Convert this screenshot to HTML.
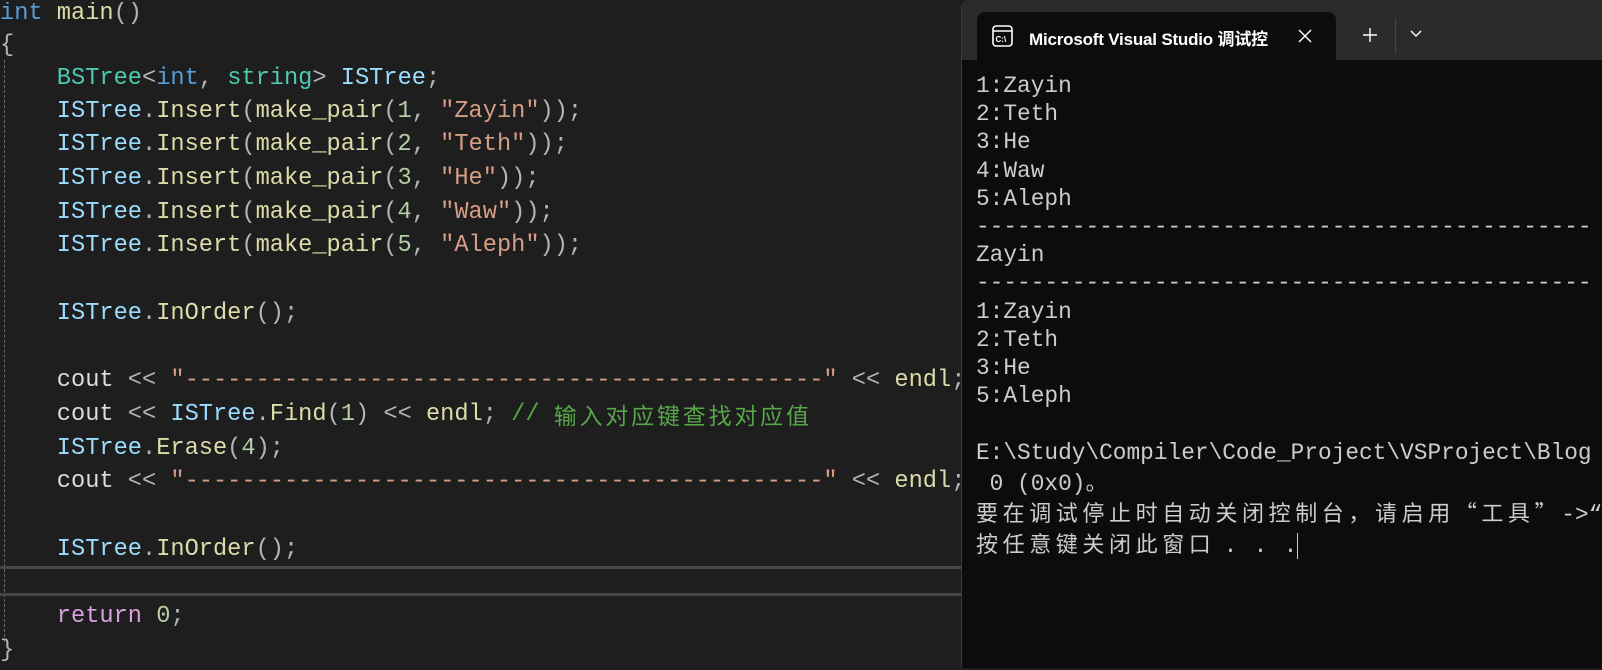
<!DOCTYPE html>
<html><head><meta charset="utf-8"><style>
*{margin:0;padding:0;box-sizing:border-box}
body{width:1602px;height:668px;overflow:hidden;background:#1e1e1e;position:relative;font-family:"Liberation Mono","Noto Sans CJK SC",monospace}
.code{position:absolute;left:0;top:2px;width:961px;height:668px;background:#1e1e1e;overflow:hidden}
.l{position:absolute;left:0;height:34px;line-height:34px;font-size:23.67px;white-space:pre;color:#b4b4b4}
.k{color:#569cd6}.f{color:#dcdcaa}.t{color:#4ec9b0}.v{color:#9cdcfe}.s{color:#d69d85}.n{color:#b5cea8}.c{color:#57a64a}.r{color:#d8a0df}.p{color:#b4b4b4}.w{color:#dcdcdc}
.cj{letter-spacing:2.8px;font-family:"Noto Sans CJK SC",sans-serif;font-size:23px;line-height:20px;vertical-align:top;display:inline-block;margin-top:6px}
.guide{position:absolute;left:4px;top:58px;height:582px;border-left:1px dashed #6a6a6a}
.cur{position:absolute;left:0;width:961px;top:564px;height:30px;border-top:3px solid #464646;border-bottom:3px solid #464646}
.win{position:absolute;left:961px;top:0;width:660px;height:668px;background:#0c0c0c;border-left:1px solid #3a3a3a;border-top-left-radius:8px;overflow:hidden}
.tb{position:absolute;left:0;top:0;width:100%;height:60px;background:#2b2b2b}
.tab{position:absolute;left:15px;top:12px;width:359px;height:50px;background:#0c0c0c;border-radius:8px 8px 0 0}
.tt{position:absolute;left:52px;top:13px;font-family:"Liberation Sans","Noto Sans CJK SC",sans-serif;font-size:17px;color:#fff;font-weight:bold;white-space:nowrap;letter-spacing:-0.2px}
.con{position:absolute;left:14px;top:72px;font-size:22.8px;line-height:28.2px;color:#cccccc;white-space:pre}
.cc{letter-spacing:4.6px;font-family:"Noto Sans CJK SC",sans-serif;font-size:22px}
.dot{display:inline-block;width:30px;text-align:center}
</style></head><body>
<div class="code">
<div class="guide"></div>
<div class="cur"></div>
<div class="l" style="top:-5px"><span class="k">int</span> <span class="f">main</span>()</div>
<div class="l" style="top:27px">{</div>
<div class="l" style="top:60px">    <span class="t">BSTree</span>&lt;<span class="k">int</span>, <span class="t">string</span>&gt; <span class="v">ISTree</span>;</div>
<div class="l" style="top:93px">    <span class="v">ISTree</span>.<span class="f">Insert</span>(<span class="f">make_pair</span>(<span class="n">1</span>, <span class="s">"Zayin"</span>));</div>
<div class="l" style="top:126px">    <span class="v">ISTree</span>.<span class="f">Insert</span>(<span class="f">make_pair</span>(<span class="n">2</span>, <span class="s">"Teth"</span>));</div>
<div class="l" style="top:160px">    <span class="v">ISTree</span>.<span class="f">Insert</span>(<span class="f">make_pair</span>(<span class="n">3</span>, <span class="s">"He"</span>));</div>
<div class="l" style="top:194px">    <span class="v">ISTree</span>.<span class="f">Insert</span>(<span class="f">make_pair</span>(<span class="n">4</span>, <span class="s">"Waw"</span>));</div>
<div class="l" style="top:227px">    <span class="v">ISTree</span>.<span class="f">Insert</span>(<span class="f">make_pair</span>(<span class="n">5</span>, <span class="s">"Aleph"</span>));</div>
<div class="l" style="top:295px">    <span class="v">ISTree</span>.<span class="f">InOrder</span>();</div>
<div class="l" style="top:362px">    <span class="w">cout</span> &lt;&lt; <span class="s">"---------------------------------------------"</span> &lt;&lt; <span class="f">endl</span>;</div>
<div class="l" style="top:396px">    <span class="w">cout</span> &lt;&lt; <span class="v">ISTree</span>.<span class="f">Find</span>(<span class="n">1</span>) &lt;&lt; <span class="f">endl</span>; <span class="c">// <span class="cj">输入对应键查找对应值</span></span></div>
<div class="l" style="top:430px">    <span class="v">ISTree</span>.<span class="f">Erase</span>(<span class="n">4</span>);</div>
<div class="l" style="top:463px">    <span class="w">cout</span> &lt;&lt; <span class="s">"---------------------------------------------"</span> &lt;&lt; <span class="f">endl</span>;</div>
<div class="l" style="top:531px">    <span class="v">ISTree</span>.<span class="f">InOrder</span>();</div>
<div class="l" style="top:598px">    <span class="r">return</span> <span class="n">0</span>;</div>
<div class="l" style="top:632px">}</div>
</div>
<div class="win">
<div class="tb"></div>
<div class="tab">
<svg style="position:absolute;left:15px;top:13px" width="21" height="22" viewBox="0 0 21 22"><rect x="1" y="1" width="19" height="20" rx="3" fill="none" stroke="#fff" stroke-width="1.6"/><line x1="1" y1="6" x2="20" y2="6" stroke="#fff" stroke-width="1.4"/><text x="3.5" y="17" font-family="Liberation Sans" font-size="8" font-weight="bold" fill="#fff">C:\</text></svg>
<div class="tt">Microsoft Visual Studio 调试控</div>
<svg style="position:absolute;left:320px;top:16px" width="16" height="16" viewBox="0 0 16 16"><path d="M2 2L14 14M14 2L2 14" stroke="#fff" stroke-width="1.4"/></svg>
</div>
<svg style="position:absolute;left:400px;top:27px" width="16" height="16" viewBox="0 0 16 16"><path d="M8 1V15M1 8H15" stroke="#fff" stroke-width="1.4"/></svg>
<div style="position:absolute;left:433px;top:18px;width:1px;height:36px;background:#444"></div>
<svg style="position:absolute;left:448px;top:30px" width="12" height="8" viewBox="0 0 12 8"><path d="M1 1L6 6L11 1" fill="none" stroke="#fff" stroke-width="1.4"/></svg>
<div class="con">1:Zayin
2:Teth
3:He
4:Waw
5:Aleph
---------------------------------------------
Zayin
---------------------------------------------
1:Zayin
2:Teth
3:He
5:Aleph

E:\Study\Compiler\Code_Project\VSProject\Blog
 0 (0x0)<span class="cc">。</span>
<span class="cc">要在调试停止时自动关闭控制台，请启用“工具”</span>-&gt;“
<span class="cc">按任意键关闭此窗口</span><span class="dot">.</span><span class="dot">.</span><span class="dot">.</span><span style="border-left:1px solid #ccc;margin-left:-8px"> </span></div>
</div>
</body></html>
